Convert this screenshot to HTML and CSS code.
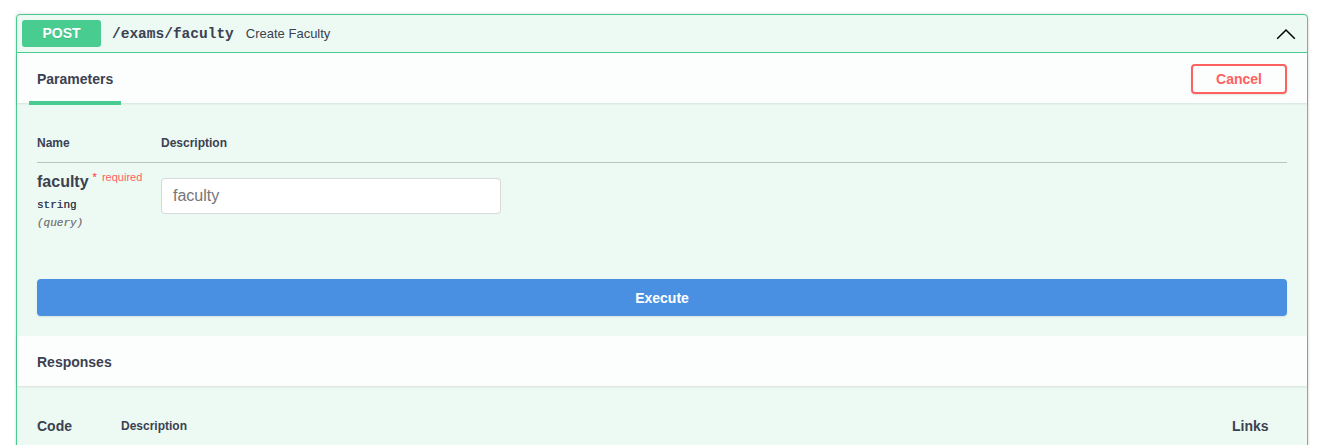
FILE: index.html
```html
<!DOCTYPE html>
<html lang="en">
<head>
<meta charset="utf-8">
<title>POST /exams/faculty</title>
<link rel="stylesheet" href="styles.css">
</head>
<body>
<div class="opblock">
  <div class="summary">
    <span class="method">POST</span>
    <span class="path">/exams/faculty</span>
    <span class="summary-desc">Create Faculty</span>
    <svg class="arrow" width="20" height="12" viewBox="0 0 20 12" aria-hidden="true">
      <polyline points="1.2,10.8 10,2 18.8,10.8" fill="none" stroke="#000" stroke-width="1.5"/>
    </svg>
  </div>

  <div class="section-header">
    <div class="tab">Parameters</div>
    <button class="cancel" type="button">Cancel</button>
  </div>

  <div class="section-body">
    <div class="params-head">
      <div class="col-name">Name</div>
      <div class="col-desc">Description</div>
    </div>
    <div class="param-row">
      <div class="col-name">
        <div class="param-name">faculty<span class="req"><span class="star">*</span> required</span></div>
        <div class="param-type">string</div>
        <div class="param-in">(query)</div>
      </div>
      <div class="col-desc">
        <input class="param-input" type="text" placeholder="faculty">
      </div>
    </div>
    <div class="execute-wrap">
      <button class="execute" type="button">Execute</button>
    </div>
  </div>

  <div class="section-header responses-header">
    <div class="resp-title">Responses</div>
  </div>

  <div class="section-body responses-body">
    <div class="resp-head">
      <div class="col-code">Code</div>
      <div class="col-rdesc">Description</div>
      <div class="col-links">Links</div>
    </div>
  </div>
</div>
</body>
</html>
```

FILE: styles.css
```css
html, body {
  margin: 0;
  padding: 0;
  background: #ffffff;
}

body {
  font-family: "Liberation Sans", Arial, sans-serif;
  color: #3b4151;
  padding: 14px 12px 0 16px;
  height: 445px;
  overflow: hidden;
  box-sizing: border-box;
}

.opblock {
  border: 1px solid #49cc90;
  border-radius: 4px;
  background: #edfaf4;
  box-shadow: 0 0 3px rgba(0, 0, 0, 0.19);
}

.summary {
  display: flex;
  align-items: center;
  padding: 5px;
  border-bottom: 1px solid #49cc90;
  box-sizing: border-box;
  height: 38px;
}

.method {
  background: #49cc90;
  color: #fff;
  font-weight: bold;
  font-size: 14px;
  width: 79px;
  height: 27px;
  line-height: 27px;
  text-align: center;
  border-radius: 3px;
  text-shadow: 0 1px 0 rgba(0, 0, 0, 0.1);
}

.path {
  font-family: "Liberation Mono", "DejaVu Sans Mono", monospace;
  font-weight: bold;
  font-size: 14.5px;
  padding: 0 12px 0 11px;
  color: #3b4151;
}

.summary-desc {
  font-size: 13px;
  flex: 1;
  color: #3b4151;
}

.arrow {
  margin-right: 6px;
  display: block;
}

.section-header {
  display: flex;
  align-items: stretch;
  justify-content: space-between;
  height: 50px;
  box-sizing: border-box;
  padding: 0 20px 0 12px;
  background: rgba(255, 255, 255, 0.8);
  box-shadow: 0 1px 2px rgba(0, 0, 0, 0.1);
  position: relative;
}

.tab {
  display: flex;
  align-items: center;
  padding: 4px 8px 0 8px;
  height: 44px;
  font-size: 14px;
  font-weight: bold;
  border-bottom: 4px solid #49cc90;
}

.cancel {
  align-self: center;
  margin-top: 1px;
  width: 96px;
  height: 30px;
  border: 2px solid #ff6060;
  border-radius: 4px;
  background: transparent;
  color: #ff6060;
  font-family: "Liberation Sans", Arial, sans-serif;
  font-size: 14px;
  font-weight: bold;
  padding: 0;
  box-shadow: 0 1px 2px rgba(0, 0, 0, 0.1);
}

.section-body {
  padding: 22px 20px 20px 20px;
}

.params-head {
  display: flex;
  font-size: 12px;
  font-weight: bold;
  padding: 11px 0 11px 0;
  line-height: 15px;
  border-bottom: 1px solid rgba(59, 65, 81, 0.3);
}

.col-name {
  width: 124px;
  flex-shrink: 0;
}

.col-desc {
  flex: 1;
}

.param-row {
  display: flex;
  padding-top: 11px;
}

.param-name {
  font-size: 16px;
  font-weight: bold;
  line-height: 16px;
}

.req {
  font-size: 11px;
  font-weight: normal;
  color: #ff6060;
  vertical-align: top;
  position: relative;
  top: -2px;
  margin-left: 4px;
  line-height: 10px;
}

.star {
  font-size: 11px;
  margin-right: 2px;
  text-shadow: 0 0 0.5px #ff6060;
}

.param-type {
  font-family: "Liberation Mono", "DejaVu Sans Mono", monospace;
  font-size: 11px;
  line-height: 18px;
  margin-top: 6px;
  font-weight: normal;
  color: #3b4151;
  text-shadow: 0 0 0.4px #3b4151;
}

.param-in {
  font-family: "Liberation Mono", "DejaVu Sans Mono", monospace;
  font-size: 11px;
  font-style: italic;
  color: #808080;
  line-height: 18px;
  text-shadow: 0 0 0.4px #808080;
}

.param-input {
  display: block;
  margin-top: 4px;
  width: 340px;
  height: 36px;
  box-sizing: border-box;
  border: 1px solid #d9d9d9;
  border-radius: 4px;
  background: #fff;
  padding: 7px 11px;
  font-family: "Liberation Sans", Arial, sans-serif;
  font-size: 16px;
  color: #3b4151;
  box-shadow: 0 0 1px rgba(0, 0, 0, 0.05);
}

.param-input::placeholder {
  color: #757575;
}

.execute-wrap {
  padding-top: 47px;
}

.execute {
  display: block;
  width: 100%;
  height: 37px;
  border: none;
  border-radius: 4px;
  background: #4990e2;
  color: #fff;
  font-family: "Liberation Sans", Arial, sans-serif;
  font-size: 14px;
  font-weight: bold;
  box-shadow: 0 1px 2px rgba(0, 0, 0, 0.1);
}

.responses-header {
  padding: 0 20px;
  align-items: center;
}

.resp-title {
  font-size: 14px;
  font-weight: bold;
  padding-top: 2px;
}

.responses-body {
  padding-top: 32px;
}

.resp-head {
  display: flex;
  align-items: center;
  font-weight: bold;
  line-height: 16px;
}

.col-code {
  width: 84px;
  font-size: 14px;
}

.col-rdesc {
  flex: 1;
  font-size: 12px;
}

.col-links {
  width: 55px;
  font-size: 14px;
}
```
